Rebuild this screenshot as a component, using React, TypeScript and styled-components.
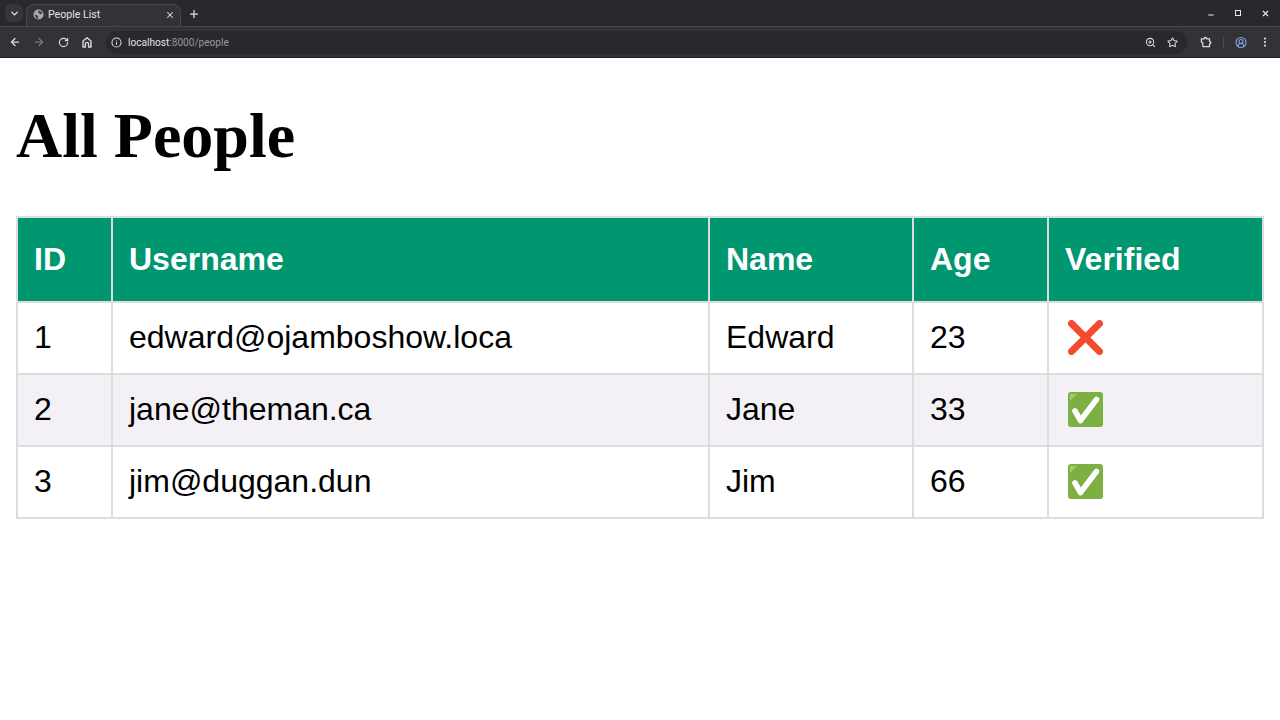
import styled, { createGlobalStyle } from "styled-components";
import { ArrowLeft, ArrowRight, ChevronDown, EllipsisVertical, Info, Minus, Plus, RotateCw, Star, X, ZoomIn, CircleUserRound } from "lucide-react";

const GlobalStyle = createGlobalStyle`
  html, body {
    margin: 0;
    padding: 0;
    background: #ffffff;
  }
`;

const Page = styled.div`
  width: 1280px;
  height: 720px;
  overflow: hidden;
  display: flex;
  flex-direction: column;
`;

const TabStrip = styled.div`
  height: 26px;
  background: #29282c;
  display: flex;
  align-items: flex-end;
  padding-left: 5px;
  font-family: "Roboto", "Liberation Sans", sans-serif;
`;

const TabMenu = styled.div`
  width: 18px;
  height: 18px;
  margin: 0 3px 4px 0;
  border-radius: 6px;
  background: #36353a;
  color: #e6e6e6;
  display: flex;
  align-items: center;
  justify-content: center;
`;

const Tab = styled.div`
  width: 155px;
  height: 22px;
  box-sizing: border-box;
  padding: 0 5px 2px 6px;
  background: #333237;
  border: 1px solid #48474c;
  border-bottom: none;
  border-radius: 8px 8px 0 0;
  display: flex;
  align-items: center;
  gap: 4px;
  color: #e3e3e3;
  font-size: 10.6px;
`;

const TabTitle = styled.span`
  flex: 1;
`;

const NewTab = styled.div`
  margin: 0 0 6px 7px;
  color: #e3e3e3;
  display: flex;
`;

const WindowControls = styled.div`
  margin-left: auto;
  height: 26px;
  display: flex;
  align-items: center;
  gap: 18px;
  padding-right: 10px;
  color: #e8e8e8;
`;

const MinimizeIcon = styled(Minus)`
  margin-top: 4px;
`;

const MaxIcon = styled.div`
  width: 4px;
  height: 4px;
  border: 1px solid #e8e8e8;
  margin: 0 2px;
`;

const Toolbar = styled.div`
  height: 32px;
  box-sizing: border-box;
  background: #333237;
  border-top: 1px solid #48474c;
  border-bottom: 1px solid #1f1e22;
  display: flex;
  align-items: center;
  padding: 0 9px 0 9px;
  gap: 12px;
  color: #dcdcdc;
`;

const NavIcon = styled.div<{ $dim?: boolean }>`
  width: 12px;
  display: flex;
  justify-content: center;
  color: ${(p) => (p.$dim ? "#77767a" : "#dcdcdc")};
`;

const Omnibox = styled.div`
  flex: 1;
  height: 23px;
  margin-left: 1px;
  margin-right: 1px;
  padding: 0 9px 0 5px;
  border-radius: 12px;
  background: #29282c;
  display: flex;
  align-items: center;
  gap: 6px;
  font-family: "Roboto", "Liberation Sans", sans-serif;
  font-size: 10.1px;
`;

const Url = styled.span`
  flex: 1;
  color: #e3e3e3;
`;

const UrlRest = styled.span`
  color: #9a999d;
`;

const BookmarkIcon = styled(Star)`
  margin-left: 5px;
`;

const Divider = styled.div`
  width: 1px;
  height: 12px;
  margin: 0 -1px;
  background: #4a494e;
`;

const Content = styled.main`
  flex: 1;
  padding: 0 16px;
  background: #ffffff;
`;

const Heading = styled.h1`
  margin: 41px 0 43px;
  font-family: "Liberation Serif", serif;
  font-size: 64px;
  line-height: 74px;
  font-weight: 700;
  color: #000000;
`;

const Table = styled.table`
  width: 1248px;
  border-collapse: collapse;
  table-layout: fixed;
  font-family: "Liberation Sans", sans-serif;
  font-size: 32px;
`;

const HeadCell = styled.th<{ $width: number }>`
  width: ${(p) => p.$width}px;
  height: 85px;
  box-sizing: border-box;
  padding: 0 16px;
  text-align: left;
  font-weight: 700;
  color: #ffffff;
  background: #009670;
  border: 2.5px solid #dddddd;
`;

const Row = styled.tr<{ $striped?: boolean }>`
  background: ${(p) => (p.$striped ? "#f3f1f5" : "#ffffff")};
`;

const Cell = styled.td`
  height: 72px;
  box-sizing: border-box;
  padding: 0 16px 2px;
  color: #000000;
  border: 2.5px solid #dddddd;
`;

const Mark = styled.svg`
  display: block;
  width: 35px;
  height: 35px;
  margin-left: 3px;
`;

const Cross = () => (
  <Mark viewBox="0 0 35 35">
    <path d="M3.5 3.5 L31.5 31.5 M31.5 3.5 L3.5 31.5" stroke="#f44b2e" strokeWidth="7" strokeLinecap="round" />
  </Mark>
);

const Check = () => (
  <Mark viewBox="0 0 35 35">
    <rect width="35" height="35" rx="3" fill="#7cb043" />
    <path d="M2 2 H9 L2 9 Z" fill="#a3c97a" />
    <path d="M7 19 L12.5 28.5 L28.5 7.5" fill="none" stroke="#ffffff" strokeWidth="5.5" strokeLinecap="round" strokeLinejoin="round" />
  </Mark>
);

const TabGlobe = () => (
  <svg width="11" height="11" viewBox="0 0 12 12">
    <circle cx="6" cy="6" r="5.5" fill="#a9a9ad" />
    <path d="M6.5 1.5 L10 3.5 L9 6 L6.5 5 L5.5 3 Z M2 6 L5 7 L6 10.5 L4 10 L2.5 8 Z" fill="#3c3b40" />
  </svg>
);

const HomeIcon = () => (
  <svg width="12" height="12" viewBox="0 0 12 12" fill="none" stroke="currentColor" strokeWidth="1.4" strokeLinejoin="round">
    <path d="M2 11V5L6 1.8 10 5v6H7.6V8a1.6 1.6 0 0 0-3.2 0v3z" />
  </svg>
);

const ExtensionIcon = () => (
  <svg width="13" height="13" viewBox="0 0 13 13" fill="none" stroke="currentColor" strokeWidth="1.4" strokeLinejoin="round">
    <path d="M1.5 2.5h3a1.4 1.4 0 0 1 2.8 0h3v2.7a1.4 1.4 0 0 1 0 2.8v3h-7l-.6-2.2a1.6 1.6 0 0 0-1.2-2.8z" />
  </svg>
);

const columns = [
  { label: "ID", width: 95 },
  { label: "Username", width: 597 },
  { label: "Name", width: 204 },
  { label: "Age", width: 135 },
  { label: "Verified", width: 215 },
];

const people = [
  { id: 1, username: "edward@ojamboshow.loca", name: "Edward", age: 23, verified: false },
  { id: 2, username: "jane@theman.ca", name: "Jane", age: 33, verified: true },
  { id: 3, username: "jim@duggan.dun", name: "Jim", age: 66, verified: true },
];

const App = () => {
  return (
    <Page>
      <GlobalStyle />
      <TabStrip>
        <TabMenu>
          <ChevronDown size={11} strokeWidth={3} />
        </TabMenu>
        <Tab>
          <TabGlobe />
          <TabTitle>People List</TabTitle>
          <X size={10} strokeWidth={2.5} />
        </Tab>
        <NewTab>
          <Plus size={12} strokeWidth={2.5} />
        </NewTab>
        <WindowControls>
          <MinimizeIcon size={8} strokeWidth={3} />
          <MaxIcon />
          <X size={9} strokeWidth={3} />
        </WindowControls>
      </TabStrip>
      <Toolbar>
        <NavIcon>
          <ArrowLeft size={12} strokeWidth={2.5} />
        </NavIcon>
        <NavIcon $dim>
          <ArrowRight size={12} strokeWidth={2.5} />
        </NavIcon>
        <NavIcon>
          <RotateCw size={11} strokeWidth={2.5} />
        </NavIcon>
        <NavIcon>
          <HomeIcon />
        </NavIcon>
        <Omnibox>
          <Info size={11} strokeWidth={2.2} />
          <Url>
            localhost<UrlRest>:8000/people</UrlRest>
          </Url>
          <ZoomIn size={11} strokeWidth={2.2} />
          <BookmarkIcon size={11} strokeWidth={2.2} />
        </Omnibox>
        <NavIcon>
          <ExtensionIcon />
        </NavIcon>
        <Divider />
        <NavIcon>
          <CircleUserRound size={13} color="#7ea6e8" strokeWidth={2.2} />
        </NavIcon>
        <NavIcon>
          <EllipsisVertical size={12} strokeWidth={2.5} />
        </NavIcon>
      </Toolbar>
      <Content>
        <Heading>All People</Heading>
        <Table>
          <thead>
            <tr>
              {columns.map((c) => (
                <HeadCell key={c.label} $width={c.width}>
                  {c.label}
                </HeadCell>
              ))}
            </tr>
          </thead>
          <tbody>
            {people.map((p, i) => (
              <Row key={p.id} $striped={i % 2 === 1}>
                <Cell>{p.id}</Cell>
                <Cell>{p.username}</Cell>
                <Cell>{p.name}</Cell>
                <Cell>{p.age}</Cell>
                <Cell>{p.verified ? <Check /> : <Cross />}</Cell>
              </Row>
            ))}
          </tbody>
        </Table>
      </Content>
    </Page>
  );
};

export default App;
